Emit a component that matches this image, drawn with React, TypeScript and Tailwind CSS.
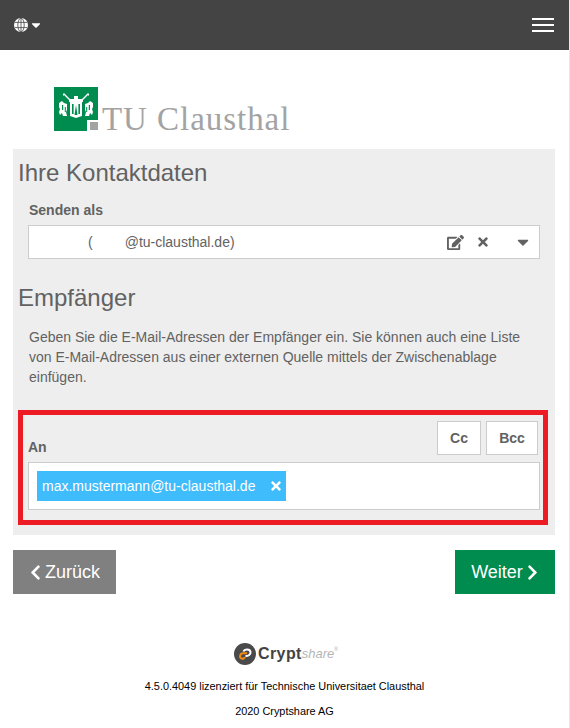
import { FaCaretDown, FaChevronLeft, FaChevronRight, FaEdit, FaTimes } from 'react-icons/fa';

function GlobeIcon() {
  return (
    <svg width="14" height="14" viewBox="0 0 14 14">
      <circle cx="7" cy="7" r="7" fill="#fff" />
      <g fill="none" stroke="#555" strokeWidth="0.9">
        <ellipse cx="7" cy="7" rx="3.2" ry="6.8" />
        <path d="M7 0v14M0.8 4.4h12.4M0.8 9.6h12.4" />
      </g>
    </svg>
  );
}

function Crest() {
  return (
    <svg width="45" height="45" viewBox="0 0 45 45" className="shrink-0">
      <rect width="44" height="44" fill="#008b4f" />
      <rect x="33" y="33" width="12" height="12" fill="#fff" />
      <rect x="36" y="35" width="8" height="8" fill="#a3a3a3" />
      <g fill="#fff">
        {/* castle */}
        <path d="M15 12h14v3h-1v14l-6 2-6-2V15h-1z" />
        {/* lions */}
        <path d="M5 16l3-2 2 2 3 1v6l-1 2 1 4H9l-1-3-2 2-1-3 1-3-1-2z" />
        <path d="M39 16l-3-2-2 2-3 1v6l1 2-1 4h4l1-3 2 2 1-3-1-3 1-2z" />
        {/* hammers */}
        <path d="M9 7l1-1 1 1 5 5-1 1-5-5-1 1zM35 7l-1-1-1 1-5 5 1 1 5-5 1 1z" />
        <rect x="20" y="9" width="4" height="3" />
      </g>
      <g fill="#008b4f">
        <rect x="18" y="17" width="1.6" height="10" />
        <rect x="24.4" y="17" width="1.6" height="10" />
        <path d="M22 18l1.5 10h-3z" />
        <rect x="8" y="18" width="1.2" height="5" />
        <rect x="10.8" y="20" width="1" height="5" />
        <rect x="34.8" y="18" width="1.2" height="5" />
        <rect x="32.2" y="20" width="1" height="5" />
      </g>
    </svg>
  );
}

function CryptshareMark() {
  return (
    <svg width="22" height="22" viewBox="0 0 22 22">
      <circle cx="11" cy="11" r="11" fill="#4a4a4a" />
      <path d="M9.5 8.5c1-2.5 6.5-3 7 0.5 0.3 2.5-2 4-5 4" fill="none" stroke="#fff" strokeWidth="2" />
      <path d="M13 10.2H9c-3 0-4 4.300-1.500 5.300 1.500 0.600 3 0 3.500-1.500" fill="none" stroke="#f08a12" strokeWidth="2" />
    </svg>
  );
}

export default function App() {
  return (
    <div className="w-[570px] h-[728px] overflow-hidden bg-white border-r border-[#e8e8e8] font-['Liberation_Sans',Arial,sans-serif] text-[#626262]">
      {/* Top bar */}
      <header className="h-[50px] bg-[#444444] flex items-center justify-between pl-[14px] pr-[15px]">
        <div className="flex items-center gap-[1px]">
          <GlobeIcon />
          <FaCaretDown className="text-white" size={14} />
        </div>
        <div className="flex flex-col gap-[4px] w-[22px]">
          <span className="h-[2px] bg-white" />
          <span className="h-[2px] bg-white" />
          <span className="h-[2px] bg-white" />
        </div>
      </header>

      {/* Logo */}
      <div className="h-[99px] pl-[54px] pt-[37px] flex items-start gap-[3px]">
        <Crest />
        <span className="font-['Liberation_Serif',serif] text-[33px] leading-[33px] tracking-[0.95px] text-[#a3a3a3] mt-[16px]">TU Clausthal</span>
      </div>

      {/* Main panel */}
      <main className="mx-[13px] w-[542px] h-[386px] bg-[#eeeeee] px-[5px] pt-[8px]">
        <h2 className="text-[24px] leading-[32px]">Ihre Kontaktdaten</h2>
        <div className="px-[10px]">
          <label className="block mt-[11px] pl-[1px] text-[14px] leading-[20px] font-bold">Senden als</label>
          <div className="mt-[5px] h-[34px] w-[512px] bg-white border border-[#cccccc] flex items-center text-[14px]">
            <span className="ml-[59px]">(</span>
            <span className="ml-[32px]">@tu-clausthal.de)</span>
            <FaEdit className="ml-auto" size={17} />
            <FaTimes className="ml-[12px]" size={14} />
            <FaCaretDown className="ml-[24px] mr-[7px]" size={18} />
          </div>
        </div>

        <h2 className="text-[24px] leading-[32px] mt-[23px]">Empfänger</h2>
        <p className="mt-[13px] ml-[11px] w-[510px] text-[14px] leading-[20px]">
          Geben Sie die E-Mail-Adressen der Empfänger ein. Sie können auch eine Liste von E-Mail-Adressen aus einer externen Quelle mittels der Zwischenablage einfügen.
        </p>

        <section className="mt-[23px] w-[530px] h-[115px] border-[5px] border-[#ed1c24] px-[5px] pt-[6px]">
          <div className="flex items-end">
            <span className="text-[14px] leading-[20px] font-bold mb-[-2px]">An</span>
            <button className="ml-auto w-[44px] h-[34px] bg-white border border-[#cccccc] text-[14px] font-bold">Cc</button>
            <button className="ml-[5px] w-[52px] h-[34px] bg-white border border-[#cccccc] text-[14px] font-bold">Bcc</button>
          </div>
          <div className="mt-[7px] w-[512px] h-[48px] bg-white border border-[#cccccc] pl-[8px] flex items-center">
            <div className="h-[30px] w-[249px] bg-[#3fbcfb] text-white text-[14px] flex items-center pl-[5px]">
              max.mustermann@tu-clausthal.de
              <FaTimes className="ml-auto mr-[3px]" size={14} />
            </div>
          </div>
        </section>
      </main>

      {/* Navigation */}
      <div className="mx-[13px] w-[542px] mt-[15px] flex justify-between">
        <button className="h-[44px] w-[103px] bg-[#808080] text-white text-[18px] flex items-center justify-center gap-[1px] pr-[2px]">
          <FaChevronLeft size={17} />
          Zurück
        </button>
        <button className="h-[44px] w-[100px] bg-[#008b4f] text-white text-[18px] flex items-center justify-center gap-[1px] pl-[2px]">
          Weiter
          <FaChevronRight size={17} />
        </button>
      </div>

      {/* Footer */}
      <footer className="mt-[49px] flex flex-col items-center text-black text-[10.9px]">
        <div className="h-[22px] flex items-center pl-[3px]">
          <CryptshareMark />
          <span className="ml-[2px] text-[16px] font-bold text-[#444] tracking-[0.4px]">Crypt</span>
          <span className="text-[13px] italic font-light text-[#b5b5b5]">share</span>
          <span className="text-[5px] text-[#aaa] self-start mt-[3px]">®</span>
        </div>
        <p className="mt-[14px] leading-[14px]">4.5.0.4049 lizenziert für Technische Universitaet Clausthal</p>
        <p className="mt-[11px] leading-[14px]">2020 Cryptshare AG</p>
      </footer>
    </div>
  );
}
